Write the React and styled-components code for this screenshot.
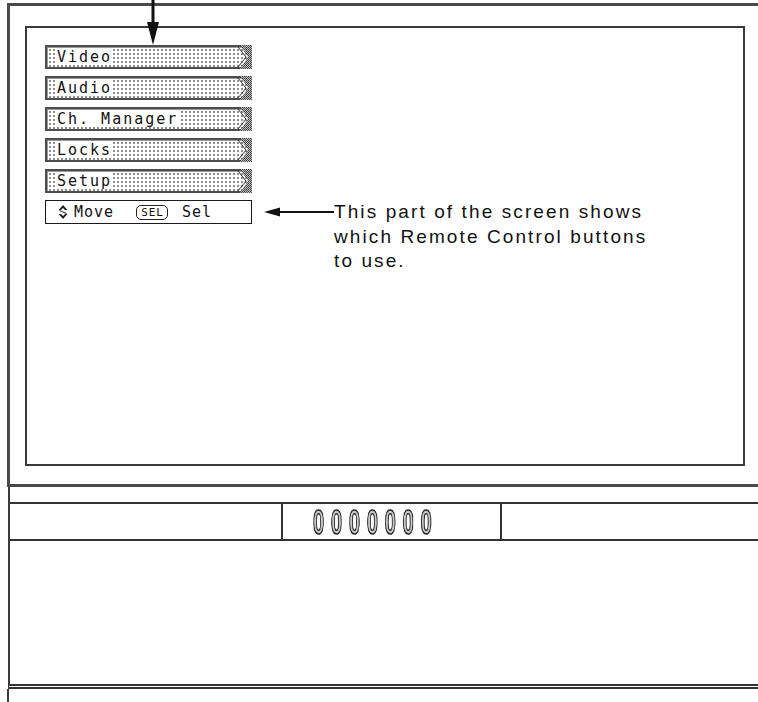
import React from "react";
import styled, { createGlobalStyle } from "styled-components";

const Global = createGlobalStyle`
  html, body { margin: 0; padding: 0; background: #fff; }
  body { width: 758px; height: 702px; overflow: hidden; }
  #root { width: 758px; height: 702px; }
`;

const Page = styled.div`
  position: relative;
  width: 758px;
  height: 702px;
  overflow: hidden;
  display: flex;
  flex-direction: column;
  padding-top: 3px;
  box-sizing: border-box;
`;

const OuterFrame = styled.div`
  margin-left: 7px;
  margin-right: -20px;
  height: 484px;
  flex: none;
  box-sizing: border-box;
  border: 3px solid #4a4a4a;
  border-right: none;
  padding: 20px 0 0 15px;
`;

const Screen = styled.div`
  width: 720px;
  height: 440px;
  box-sizing: border-box;
  border: 2px solid #3a3a3a;
  padding: 17px 0 0 18px;
`;

const Menu = styled.div`
  display: flex;
  flex-direction: column;
  gap: 7px;
`;

const MenuItem = styled.div`
  position: relative;
  width: 207px;
  height: 24px;
  box-sizing: border-box;
  border: 2px solid #4d4d4d;
  box-shadow: inset 0 1px 0 #9a9a9a, inset 1px 0 0 #9a9a9a;
  background-color: #fff;
  background-image: radial-gradient(circle, #8a8a8a 0.7px, transparent 0.9px);
  background-size: 4px 4px;
  background-position: 1px 1px;
  display: flex;
  align-items: center;
  padding-left: 9px;
  font-family: "DejaVu Sans Mono", "Liberation Mono", monospace;
  font-size: 15px;
  letter-spacing: 2px;
  color: #111;
`;

const Label = styled.span`
  background: #fff;
  padding: 0 1px;
  line-height: 16px;
`;

const Chevron = styled.svg`
  position: absolute;
  right: -2px;
  top: -2px;
`;

const MoveRow = styled.div`
  display: flex;
  align-items: flex-start;
`;

const MoveBox = styled.div`
  width: 207px;
  height: 24px;
  flex: none;
  box-sizing: border-box;
  border: 1px solid #1a1a1a;
  display: flex;
  align-items: center;
  padding-left: 12px;
  font-family: "DejaVu Sans Mono", "Liberation Mono", monospace;
  font-size: 15px;
  letter-spacing: 1px;
  color: #111;
`;

const Word = styled.span`
  margin-left: ${(p) => p.$ml || "0px"};
`;

const SelBadge = styled.span`
  margin-left: ${(p) => p.$ml || "0px"};
  border: 1px solid #222;
  border-radius: 5px;
  font-size: 11px;
  letter-spacing: 1px;
  line-height: 13px;
  padding: 0 3px 0 4px;
`;

const Callout = styled.div`
  display: flex;
  align-items: flex-start;
  margin-left: 12px;
`;

const CalloutText = styled.div`
  font-family: "Liberation Sans", Arial, sans-serif;
  font-size: 19px;
  letter-spacing: 2.1px;
  line-height: 24.5px;
  color: #111;
  white-space: nowrap;
`;

const ArrowSvg = styled.svg`
  flex: none;
  margin-top: 7px;
`;

const TopArrow = styled.svg`
  position: absolute;
  left: 146px;
  top: 0;
`;

const Cabinet = styled.div`
  margin-left: 8px;
  margin-right: -20px;
  height: 202px;
  flex: none;
  box-sizing: border-box;
  border-left: 2px solid #3a3a3a;
  border-bottom: 5px double #333;
  padding-top: 15px;
  display: flex;
  flex-direction: column;
`;

const Bar = styled.div`
  height: 39px;
  box-sizing: border-box;
  border-top: 2px solid #333;
  border-bottom: 2px solid #333;
  display: flex;
`;

const Cell = styled.div`
  box-sizing: border-box;
  width: ${(p) => p.$w || "auto"};
  flex: ${(p) => (p.$w ? "none" : "1")};
  border-left: ${(p) => (p.$divider ? "2px solid #333" : "none")};
  display: flex;
  align-items: center;
  padding-left: ${(p) => p.$pad || "0px"};
`;

const Digits = styled.span`
  font-family: "Liberation Sans", Arial, sans-serif;
  font-size: 35px;
  font-weight: bold;
  letter-spacing: 12px;
  color: #c8c8c8;
  -webkit-text-stroke: 1.6px #2a2a2a;
  display: inline-block;
  transform: scaleX(0.57);
  transform-origin: left center;
  will-change: transform;
  white-space: nowrap;
  line-height: 34px;
  margin-right: -95px;
`;

const Base = styled.div`
  flex: 1;
  margin-left: 7px;
  border-left: 2px solid #3a3a3a;
`;

function ChevronEnd() {
  return (
    <Chevron width="14" height="24" viewBox="0 0 14 24">
      <defs>
        <pattern id="hatch" width="2" height="2" patternUnits="userSpaceOnUse">
          <rect width="2" height="2" fill="#bdbdbd" />
          <rect width="1" height="1" fill="#3a3a3a" />
          <rect x="1" y="1" width="1" height="1" fill="#555" />
        </pattern>
      </defs>
      <polygon points="2,0 14,0 14,24 2,24 10,12" fill="url(#hatch)" />
      <polyline points="0,2 8,12 0,22" fill="none" stroke="#333" strokeWidth="1" />
    </Chevron>
  );
}

function MoveIcon() {
  return (
    <svg width="10" height="16" viewBox="0 0 10 16">
      <path d="M5 1 L9.5 6 L7 6 L5 4 L3 6 L0.5 6 Z" fill="#222" />
      <path d="M5 15 L9.5 10 L7 10 L5 12 L3 10 L0.5 10 Z" fill="#222" />
      <path d="M1.5 6.5 L8.5 9.5" stroke="#444" strokeWidth="1.3" />
    </svg>
  );
}

const items = ["Video", "Audio", "Ch. Manager", "Locks", "Setup"];

export default function App() {
  return (
    <>
      <Global />
      <Page>
        <TopArrow width="14" height="46" viewBox="0 0 14 46">
          <rect x="5.5" y="0" width="3" height="26" fill="#111" />
          <polygon points="1,22 13,22 7,45" fill="#111" />
        </TopArrow>
        <OuterFrame>
          <Screen>
            <Menu>
              {items.map((t) => (
                <MenuItem key={t}>
                  <Label>{t}</Label>
                  <ChevronEnd />
                </MenuItem>
              ))}
              <MoveRow>
                <MoveBox>
                  <MoveIcon />
                  <Word $ml="6px">Move</Word>
                  <SelBadge $ml="22px">SEL</SelBadge>
                  <Word $ml="14px">Sel</Word>
                </MoveBox>
                <Callout>
                  <ArrowSvg width="70" height="10" viewBox="0 0 70 10">
                    <polygon points="0,5 16,0.5 16,9.5" fill="#111" />
                    <rect x="14" y="4" width="56" height="2" fill="#111" />
                  </ArrowSvg>
                  <CalloutText>
                    This part of the screen shows
                    <br />
                    which Remote Control buttons
                    <br />
                    to use.
                  </CalloutText>
                </Callout>
              </MoveRow>
            </Menu>
          </Screen>
        </OuterFrame>
        <Cabinet>
          <Bar>
            <Cell $w="271px" />
            <Cell $w="219px" $divider $pad="30px">
              <Digits>0000000</Digits>
            </Cell>
            <Cell $divider />
          </Bar>
        </Cabinet>
        <Base />
      </Page>
    </>
  );
}
